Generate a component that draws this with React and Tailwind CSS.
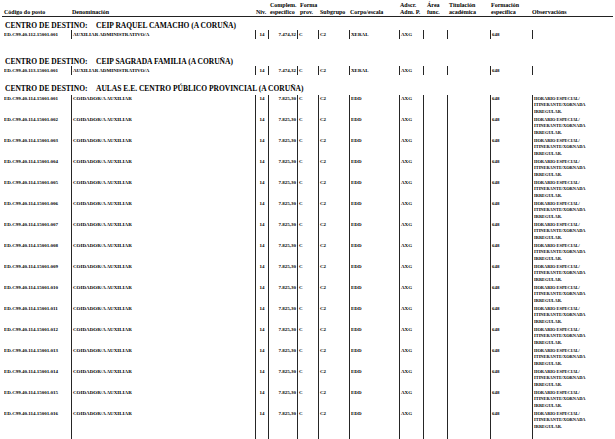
const COLS = [
  { w: "w-[67px]", cell: "", head: "" },
  { w: "w-[184px]", cell: "border-l pl-[1px]", head: "pl-[1px]" },
  { w: "w-[13px]", cell: "border-l pl-[3.5px]", head: "pl-[1px]" },
  { w: "w-[29px]", cell: "border-l pr-[1px] text-right", head: "pl-[2px]" },
  { w: "w-[21px]", cell: "border-l pl-[1px]", head: "pl-[3px]" },
  { w: "w-[31px]", cell: "border-l pl-[1px]", head: "pl-[2px]" },
  { w: "w-[50px]", cell: "border-l pl-[1px]", head: "pl-[1px]" },
  { w: "w-[24px]", cell: "border-l pl-[1px]", head: "pl-[1px]" },
  { w: "w-[24px]", cell: "border-l", head: "pl-[4px]" },
  { w: "w-[43px]", cell: "border-l", head: "pl-[2px]" },
  { w: "w-[42px]", cell: "border-l pl-[1px]", head: "pl-[1px]" },
  { w: "flex-1", cell: "border-l pl-[1px]", head: "pl-[0px]" },
];

const HEADERS = [
  ["", "Código do posto"],
  ["", "Denominación"],
  ["", "Niv."],
  ["Complem.", "específico"],
  ["Forma", "prov."],
  ["", "Subgrupo"],
  ["", "Corpo/escala"],
  ["Adscr.", "Adm. P."],
  ["Área", "func."],
  ["Titulación", "académica"],
  ["Formación", "específica"],
  ["", "Observacións"],
];

const OBS = ["HORARIO ESPECIAL/", "ITINERANTE/XORNADA", "IRREGULAR."];

function Heading({ name, className }) {
  return (
    <div className={`flex text-[7.5px] leading-[9px] whitespace-nowrap pl-[1px] ${className}`}>
      <span className="w-[91px]">CENTRO DE DESTINO:</span>
      <span>{name}</span>
    </div>
  );
}

function Row({ values, obs, tall, className = "" }) {
  return (
    <div className={`flex ${tall ? "h-[21px]" : "h-[9px]"} ${className}`}>
      {COLS.map((c, i) => (
        <div
          key={i}
          className={`${c.w} ${c.cell} border-[#262626] shrink-0 whitespace-nowrap overflow-hidden text-[5px] ${
            tall ? "leading-[7px]" : "leading-[9px]"
          }`}
        >
          {i === 11 && obs ? (
            <div className="text-[4.4px] leading-[6.5px] pt-[0.5px]">
              {OBS.map((l) => (
                <div key={l}>{l}</div>
              ))}
            </div>
          ) : (
            values[i]
          )}
        </div>
      ))}
    </div>
  );
}

const rowValues = (code, denom, complem, corpo) => [
  code,
  denom,
  "14",
  complem,
  "C",
  "C2",
  corpo,
  "AXG",
  "",
  "",
  "648",
  "",
];

export default function App() {
  const nums = Array.from({ length: 16 }, (_, i) => String(i + 1).padStart(3, "0"));
  return (
    <div className="w-[615px] h-[439px] overflow-hidden bg-white text-black font-bold [font-family:'Liberation_Serif',serif] pl-[4px]">
      {/* cabeceira */}
      <div className="flex pt-[2px] text-[6px] leading-[7px]">
        {HEADERS.map((h, i) => (
          <div key={i} className={`${COLS[i].w} ${COLS[i].head} shrink-0 whitespace-nowrap`}>
            <div className="h-[7px]">{h[0]}</div>
            <div className="h-[7px]">{h[1]}</div>
          </div>
        ))}
      </div>
      <div className="h-px bg-[#222] ml-[-2px] mr-[2px]" />

      <Heading name="CEIP RAQUEL CAMACHO (A CORUÑA)" className="mt-[3.5px]" />
      <Row
        className="mt-[0.5px]"
        values={rowValues("ED.C99.40.112.15001.001", "AUXILIAR ADMINISTRATIVO/A", "7.474,32", "XERAL")}
      />

      <Heading name="CEIP SAGRADA FAMILIA (A CORUÑA)" className="mt-[17.5px]" />
      <Row values={rowValues("ED.C99.40.113.15001.001", "AUXILIAR ADMINISTRATIVO/A", "7.474,32", "XERAL")} />

      <Heading
        name="AULAS E.E. CENTRO PÚBLICO PROVINCIAL (A CORUÑA)"
        className="mt-[9.5px]"
      />
      <div className="mt-[2px]">
        {nums.map((n) => (
          <Row
            key={n}
            tall
            obs
            values={rowValues(`ED.C99.40.114.15001.${n}`, "COIDADOR/A AUXILIAR", "7.825,30", "EDD")}
          />
        ))}
        <Row tall values={Array(12).fill("")} />
      </div>
    </div>
  );
}
